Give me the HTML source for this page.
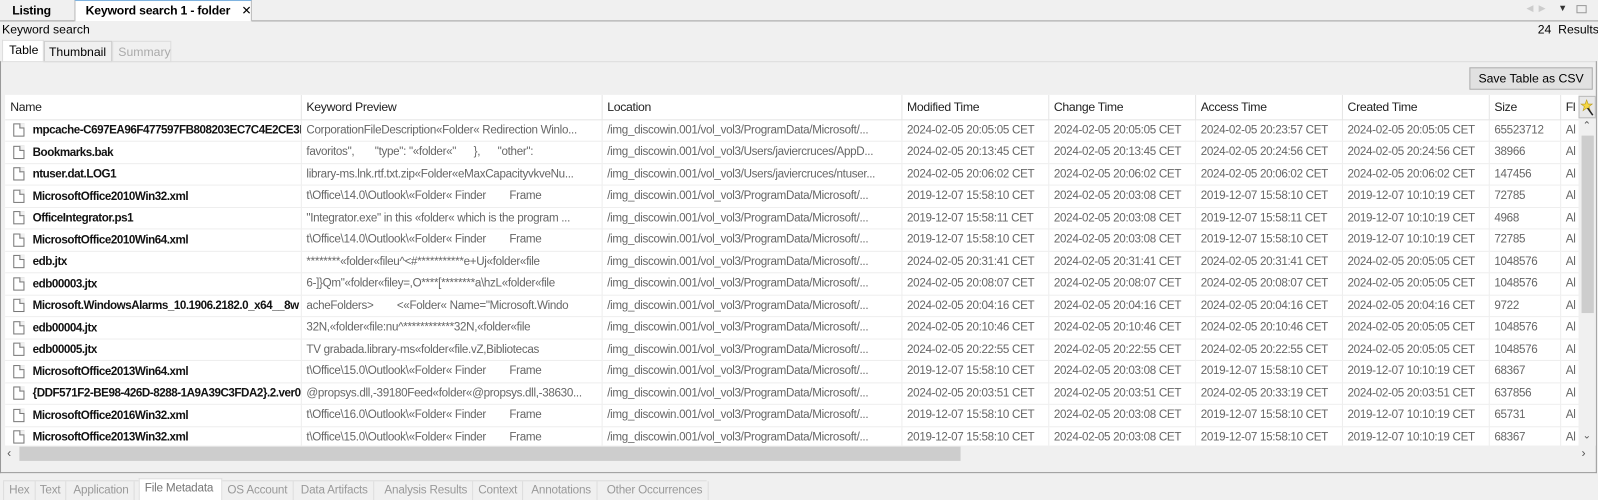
<!DOCTYPE html>
<html><head><meta charset="utf-8"><style>
*{box-sizing:border-box;margin:0;padding:0}
html,body{width:1598px;height:500px;overflow:hidden}
body{background:#f0f0f0;font-family:"Liberation Sans",sans-serif;font-size:11px;color:#000}
#w{position:relative;width:1598px;height:500px;overflow:hidden;transform:scale(1.0197);transform-origin:0 0}
.a{position:absolute}
.tab{position:absolute;top:0;height:20px;line-height:20px;font-size:12px;font-weight:bold;letter-spacing:-0.2px;white-space:nowrap}
table{border-collapse:collapse;table-layout:fixed;font-size:11.4px;letter-spacing:-0.3px}
td,th{white-space:nowrap;overflow:hidden;padding-left:5px;text-align:left;font-weight:normal}
th{height:24px;border-right:1px solid #e5e5e5;border-bottom:1px solid #e5e5e5;color:#222;font-size:12px}
td{height:21.5px;border-right:1px solid #eee;border-bottom:1px solid #eee;color:#666}
td.n{color:#111;font-weight:bold;padding-left:8px;letter-spacing:-0.45px}
.ic{display:inline-block;width:11px;height:13px;border:1px solid #777;background:#fff;vertical-align:-3px;margin-right:8px;position:relative}
.ic:after{content:"";position:absolute;right:-1px;top:-1px;width:4px;height:4px;background:#f0f0f0;border-left:1px solid #777;border-bottom:1px solid #777}
.bt{position:absolute;top:472px;height:19px;line-height:19px;color:#999;font-size:11.5px;border-right:1px solid #ddd;padding:0 5px;letter-spacing:-0.2px;white-space:nowrap}
</style></head><body><div id="w">
<div class="a" style="left:0;top:20px;width:1598px;height:1px;background:#a0a0a0"></div>
<div class="tab" style="left:12px">Listing</div>
<div class="a" style="left:73px;top:0;width:174px;height:21px;background:#fff;border:1px solid #b8b8b8;border-top:1px solid #7fb3e0;border-bottom:none"></div>
<div class="tab" style="left:84px">Keyword search 1 - folder <span style="font-weight:normal;margin-left:8px">✕</span></div>
<div class="a" style="left:1497px;top:3px;color:#ccc;font-size:9px;white-space:nowrap">◀ &nbsp;▶</div>
<div class="a" style="left:1528px;top:3px;font-size:9px;color:#333">▼</div>
<div class="a" style="left:1546px;top:5px;width:10px;height:8px;border:1px solid #999"></div>
<div class="a" style="left:2px;top:22px;font-size:12px;white-space:nowrap">Keyword search</div>
<div class="a" style="left:1508px;top:22px;font-size:12px;white-space:nowrap">24&nbsp; Results</div>
<div class="a" style="left:2px;top:39px;width:41px;height:22px;background:#fff;border:1px solid #ddd;border-bottom:none"></div>
<div class="a" style="left:9px;top:42px;font-size:12px">Table</div>
<div class="a" style="left:43px;top:40px;width:67px;height:21px;border:1px solid #ccc"></div>
<div class="a" style="left:48px;top:44px;font-size:12px">Thumbnail</div>
<div class="a" style="left:110px;top:40px;width:58px;height:21px;border:1px solid #ddd"></div>
<div class="a" style="left:116px;top:44px;font-size:12px;color:#aaa">Summary</div>
<div class="a" style="left:1px;top:60px;width:1565px;height:1px;background:#ddd"></div>
<div class="a" style="left:0;top:60px;width:1566px;height:404px;border-left:1px solid #999;border-right:1px solid #999;border-bottom:1px solid #999"></div>
<div class="a" style="left:1441px;top:66px;width:121px;height:22px;border:1px solid #adadad;background:#e1e1e1;text-align:center;line-height:20px;font-size:12px;white-space:nowrap">Save Table as CSV</div>
<div class="a" style="left:5px;top:93px;width:1543px;height:344px;background:#fff;overflow:hidden">
<table style="width:1543px">
<colgroup><col style="width:290px"><col style="width:295px"><col style="width:294px"><col style="width:144px"><col style="width:144px"><col style="width:144px"><col style="width:144px"><col style="width:70px"><col style="width:18px"></colgroup>
<tr><th>Name</th><th>Keyword Preview</th><th>Location</th><th>Modified Time</th><th>Change Time</th><th>Access Time</th><th>Created Time</th><th>Size</th><th>Fl</th></tr>
<tr><td class="n"><i class="ic"></i>mpcache-C697EA96F477597FB808203EC7C4E2CE3E</td><td>CorporationFileDescription«Folder« Redirection Winlo...</td><td>/img_discowin.001/vol_vol3/ProgramData/Microsoft/...</td><td>2024-02-05 20:05:05 CET</td><td>2024-02-05 20:05:05 CET</td><td>2024-02-05 20:23:57 CET</td><td>2024-02-05 20:05:05 CET</td><td>65523712</td><td>Al</td></tr>
<tr><td class="n"><i class="ic"></i>Bookmarks.bak</td><td>favoritos", &nbsp; &nbsp; &nbsp; "type": "«folder«" &nbsp; &nbsp; &nbsp;}, &nbsp; &nbsp; &nbsp;"other":</td><td>/img_discowin.001/vol_vol3/Users/javiercruces/AppD...</td><td>2024-02-05 20:13:45 CET</td><td>2024-02-05 20:13:45 CET</td><td>2024-02-05 20:24:56 CET</td><td>2024-02-05 20:24:56 CET</td><td>38966</td><td>Al</td></tr>
<tr><td class="n"><i class="ic"></i>ntuser.dat.LOG1</td><td>library-ms.lnk.rtf.txt.zip«Folder«eMaxCapacityvkveNu...</td><td>/img_discowin.001/vol_vol3/Users/javiercruces/ntuser...</td><td>2024-02-05 20:06:02 CET</td><td>2024-02-05 20:06:02 CET</td><td>2024-02-05 20:06:02 CET</td><td>2024-02-05 20:06:02 CET</td><td>147456</td><td>Al</td></tr>
<tr><td class="n"><i class="ic"></i>MicrosoftOffice2010Win32.xml</td><td>t\Office\14.0\Outlook\«Folder« Finder &nbsp; &nbsp; &nbsp; &nbsp;Frame</td><td>/img_discowin.001/vol_vol3/ProgramData/Microsoft/...</td><td>2019-12-07 15:58:10 CET</td><td>2024-02-05 20:03:08 CET</td><td>2019-12-07 15:58:10 CET</td><td>2019-12-07 10:10:19 CET</td><td>72785</td><td>Al</td></tr>
<tr><td class="n"><i class="ic"></i>OfficeIntegrator.ps1</td><td>"Integrator.exe" in this «folder« which is the program ...</td><td>/img_discowin.001/vol_vol3/ProgramData/Microsoft/...</td><td>2019-12-07 15:58:11 CET</td><td>2024-02-05 20:03:08 CET</td><td>2019-12-07 15:58:11 CET</td><td>2019-12-07 10:10:19 CET</td><td>4968</td><td>Al</td></tr>
<tr><td class="n"><i class="ic"></i>MicrosoftOffice2010Win64.xml</td><td>t\Office\14.0\Outlook\«Folder« Finder &nbsp; &nbsp; &nbsp; &nbsp;Frame</td><td>/img_discowin.001/vol_vol3/ProgramData/Microsoft/...</td><td>2019-12-07 15:58:10 CET</td><td>2024-02-05 20:03:08 CET</td><td>2019-12-07 15:58:10 CET</td><td>2019-12-07 10:10:19 CET</td><td>72785</td><td>Al</td></tr>
<tr><td class="n"><i class="ic"></i>edb.jtx</td><td>********«folder«fileu^&lt;#***********e+Uj«folder«file</td><td>/img_discowin.001/vol_vol3/ProgramData/Microsoft/...</td><td>2024-02-05 20:31:41 CET</td><td>2024-02-05 20:31:41 CET</td><td>2024-02-05 20:31:41 CET</td><td>2024-02-05 20:05:05 CET</td><td>1048576</td><td>Al</td></tr>
<tr><td class="n"><i class="ic"></i>edb00003.jtx</td><td>6-]}Qm"«folder«filey=,O****[********a\hzL«folder«file</td><td>/img_discowin.001/vol_vol3/ProgramData/Microsoft/...</td><td>2024-02-05 20:08:07 CET</td><td>2024-02-05 20:08:07 CET</td><td>2024-02-05 20:08:07 CET</td><td>2024-02-05 20:05:05 CET</td><td>1048576</td><td>Al</td></tr>
<tr><td class="n"><i class="ic"></i>Microsoft.WindowsAlarms_10.1906.2182.0_x64__8w</td><td>acheFolders&gt; &nbsp; &nbsp; &nbsp; &nbsp;&lt;«Folder« Name="Microsoft.Windo</td><td>/img_discowin.001/vol_vol3/ProgramData/Microsoft/...</td><td>2024-02-05 20:04:16 CET</td><td>2024-02-05 20:04:16 CET</td><td>2024-02-05 20:04:16 CET</td><td>2024-02-05 20:04:16 CET</td><td>9722</td><td>Al</td></tr>
<tr><td class="n"><i class="ic"></i>edb00004.jtx</td><td>32N,«folder«file:nu^************32N,«folder«file</td><td>/img_discowin.001/vol_vol3/ProgramData/Microsoft/...</td><td>2024-02-05 20:10:46 CET</td><td>2024-02-05 20:10:46 CET</td><td>2024-02-05 20:10:46 CET</td><td>2024-02-05 20:05:05 CET</td><td>1048576</td><td>Al</td></tr>
<tr><td class="n"><i class="ic"></i>edb00005.jtx</td><td>TV grabada.library-ms«folder«file.vZ,Bibliotecas</td><td>/img_discowin.001/vol_vol3/ProgramData/Microsoft/...</td><td>2024-02-05 20:22:55 CET</td><td>2024-02-05 20:22:55 CET</td><td>2024-02-05 20:22:55 CET</td><td>2024-02-05 20:05:05 CET</td><td>1048576</td><td>Al</td></tr>
<tr><td class="n"><i class="ic"></i>MicrosoftOffice2013Win64.xml</td><td>t\Office\15.0\Outlook\«Folder« Finder &nbsp; &nbsp; &nbsp; &nbsp;Frame</td><td>/img_discowin.001/vol_vol3/ProgramData/Microsoft/...</td><td>2019-12-07 15:58:10 CET</td><td>2024-02-05 20:03:08 CET</td><td>2019-12-07 15:58:10 CET</td><td>2019-12-07 10:10:19 CET</td><td>68367</td><td>Al</td></tr>
<tr><td class="n"><i class="ic"></i>{DDF571F2-BE98-426D-8288-1A9A39C3FDA2}.2.ver0</td><td>@propsys.dll,-39180Feed«folder«@propsys.dll,-38630...</td><td>/img_discowin.001/vol_vol3/ProgramData/Microsoft/...</td><td>2024-02-05 20:03:51 CET</td><td>2024-02-05 20:03:51 CET</td><td>2024-02-05 20:33:19 CET</td><td>2024-02-05 20:03:51 CET</td><td>637856</td><td>Al</td></tr>
<tr><td class="n"><i class="ic"></i>MicrosoftOffice2016Win32.xml</td><td>t\Office\16.0\Outlook\«Folder« Finder &nbsp; &nbsp; &nbsp; &nbsp;Frame</td><td>/img_discowin.001/vol_vol3/ProgramData/Microsoft/...</td><td>2019-12-07 15:58:10 CET</td><td>2024-02-05 20:03:08 CET</td><td>2019-12-07 15:58:10 CET</td><td>2019-12-07 10:10:19 CET</td><td>65731</td><td>Al</td></tr>
<tr><td class="n"><i class="ic"></i>MicrosoftOffice2013Win32.xml</td><td>t\Office\15.0\Outlook\«Folder« Finder &nbsp; &nbsp; &nbsp; &nbsp;Frame</td><td>/img_discowin.001/vol_vol3/ProgramData/Microsoft/...</td><td>2019-12-07 15:58:10 CET</td><td>2024-02-05 20:03:08 CET</td><td>2019-12-07 15:58:10 CET</td><td>2019-12-07 10:10:19 CET</td><td>68367</td><td>Al</td></tr>
</table></div>
<div class="a" style="left:1548px;top:94px;width:17px;height:22px;background:#e8e8e8;border:1px solid #bbb"><svg width="15" height="20" viewBox="0 0 15 20"><polygon points="7,3 8.5,7 12.5,7 9.3,9.5 10.5,13.5 7,11 3.5,13.5 4.7,9.5 1.5,7 5.5,7" fill="#f5d742" stroke="#b89a20" stroke-width=".6"/><line x1="8" y1="11" x2="13" y2="18" stroke="#222" stroke-width="1.5"/></svg></div>
<div class="a" style="left:1548px;top:117px;width:17px;height:320px;background:#f0f0f0"></div>
<div class="a" style="left:1551px;top:133px;width:12px;height:174px;background:#cdcdcd"></div>
<div class="a" style="left:1552px;top:118px;font-size:10px;color:#555">⌃</div>
<div class="a" style="left:1552px;top:422px;font-size:10px;color:#555">⌄</div>
<div class="a" style="left:5px;top:437px;width:1543px;height:16px;background:#f0f0f0"></div>
<div class="a" style="left:19px;top:438px;width:923px;height:14px;background:#cdcdcd"></div>
<div class="a" style="left:7px;top:437px;font-size:12px;color:#555">‹</div>
<div class="a" style="left:1551px;top:437px;font-size:12px;color:#555">›</div>
<div class="a" style="left:3px;top:471px;width:690px;height:1px;background:#ddd"></div>
<div class="bt" style="left:3px;border-left:1px solid #ddd">Hex</div>
<div class="bt" style="left:34px">Text</div>
<div class="bt" style="left:67px">Application</div>
<div class="a" style="left:136px;top:469px;width:82px;height:23px;background:#fff;border:1px solid #ddd;border-bottom:none"></div>
<div class="bt" style="left:137px;top:470px;color:#777;border:none">File Metadata</div>
<div class="bt" style="left:218px">OS Account</div>
<div class="bt" style="left:290px">Data Artifacts</div>
<div class="bt" style="left:372px">Analysis Results</div>
<div class="bt" style="left:464px">Context</div>
<div class="bt" style="left:516px">Annotations</div>
<div class="bt" style="left:590px">Other Occurrences</div>
</div></body></html>
